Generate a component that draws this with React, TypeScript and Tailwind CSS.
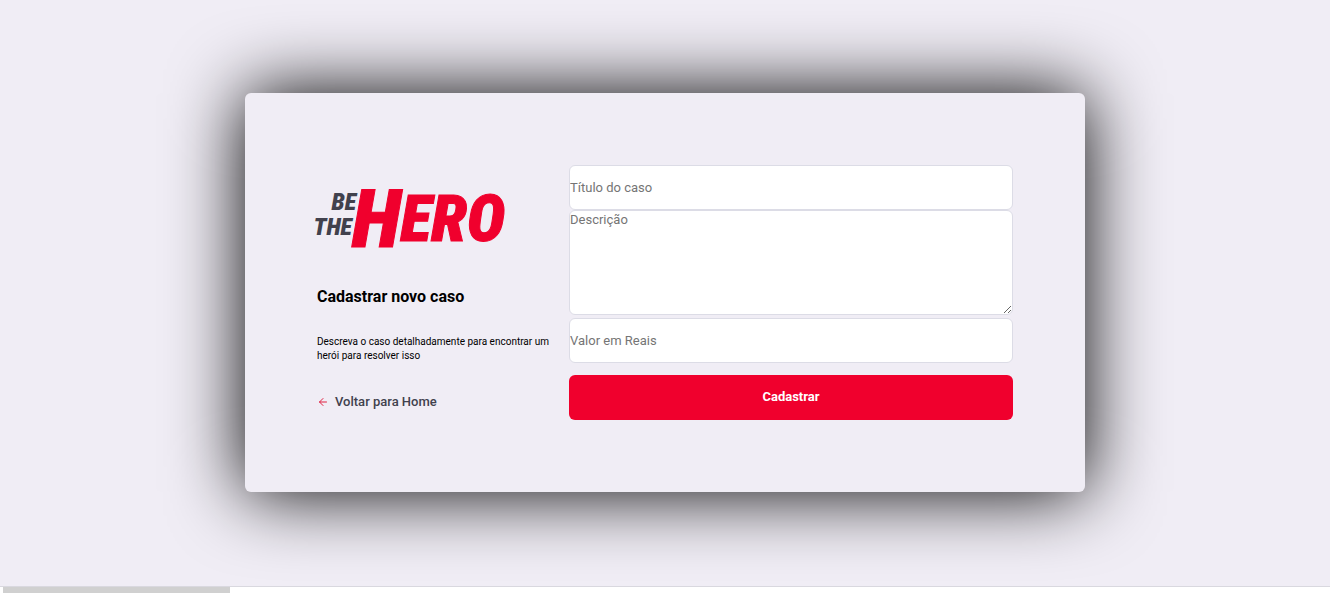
import { FiArrowLeft } from "react-icons/fi";

const field =
  "block w-full rounded-md border border-[#dcdce6] bg-white p-0 text-[13px] leading-[18px] text-[#333] placeholder:text-[#757575]";

function Logo() {
  return (
    <svg
      role="img"
      aria-label="Be The Hero"
      viewBox="0 0 188 79"
      className="block h-[79px] w-[188px] overflow-visible font-['Roboto_Condensed','Liberation_Sans_Narrow',sans-serif] font-black italic"
    >
      <g fill="#41414d" fontSize="24">
        <text x="39" y="36" textAnchor="end">BE</text>
        <text x="35" y="61" textAnchor="end">THE</text>
      </g>
      <g fill="#f0002d" stroke="#f0002d" strokeWidth="1">
        <text y="73" x="35" fontSize="82">
          H<tspan y="67" fontSize="65">ERO</tspan>
        </text>
      </g>
    </svg>
  );
}

export default function App() {
  return (
    <div className="flex min-h-screen flex-col bg-[#f0edf5] font-[Roboto,sans-serif] text-black">
      <main className="flex flex-1 items-center justify-center overflow-hidden pb-0.5">
        <div className="flex w-full max-w-[840px] items-stretch justify-between rounded-md bg-[#f0edf5] p-[72px] shadow-[0_0_75px_#000]">
          <section className="flex w-[252px] flex-col items-start pt-[9px]">
            <Logo />
            <h1 className="mt-8 text-base leading-6 font-bold">Cadastrar novo caso</h1>
            <p className="mt-[26px] text-[10px] leading-[14px]">
              Descreva o caso detalhadamente para encontrar um herói para resolver isso
            </p>
            <a href="#home" className="mt-[30px] flex items-center gap-1.5 text-[13px] leading-[18px] font-medium text-[#41414d]">
              <FiArrowLeft size={12} color="#e02041" aria-hidden="true" />
              Voltar para Home
            </a>
          </section>
          <form className="flex-1" onSubmit={(e) => e.preventDefault()}>
            <input aria-label="Título do caso" placeholder="Título do caso" className={`${field} h-[45px]`} />
            <textarea aria-label="Descrição" placeholder="Descrição" className={`${field} h-[105px] resize-y`} />
            <input aria-label="Valor em Reais" placeholder="Valor em Reais" className={`${field} mt-[3px] h-[45px]`} />
            <button type="submit" className="mt-3 block h-[45px] w-full rounded-md bg-[#f0002d] text-[13px] leading-[18px] font-bold text-white">
              Cadastrar
            </button>
          </form>
        </div>
      </main>
      <footer className="h-[7px] border-t border-[#d9d8df] bg-white px-[3px]">
        <div className="h-full w-[227px] bg-[#d0d0d0]" />
      </footer>
    </div>
  );
}
